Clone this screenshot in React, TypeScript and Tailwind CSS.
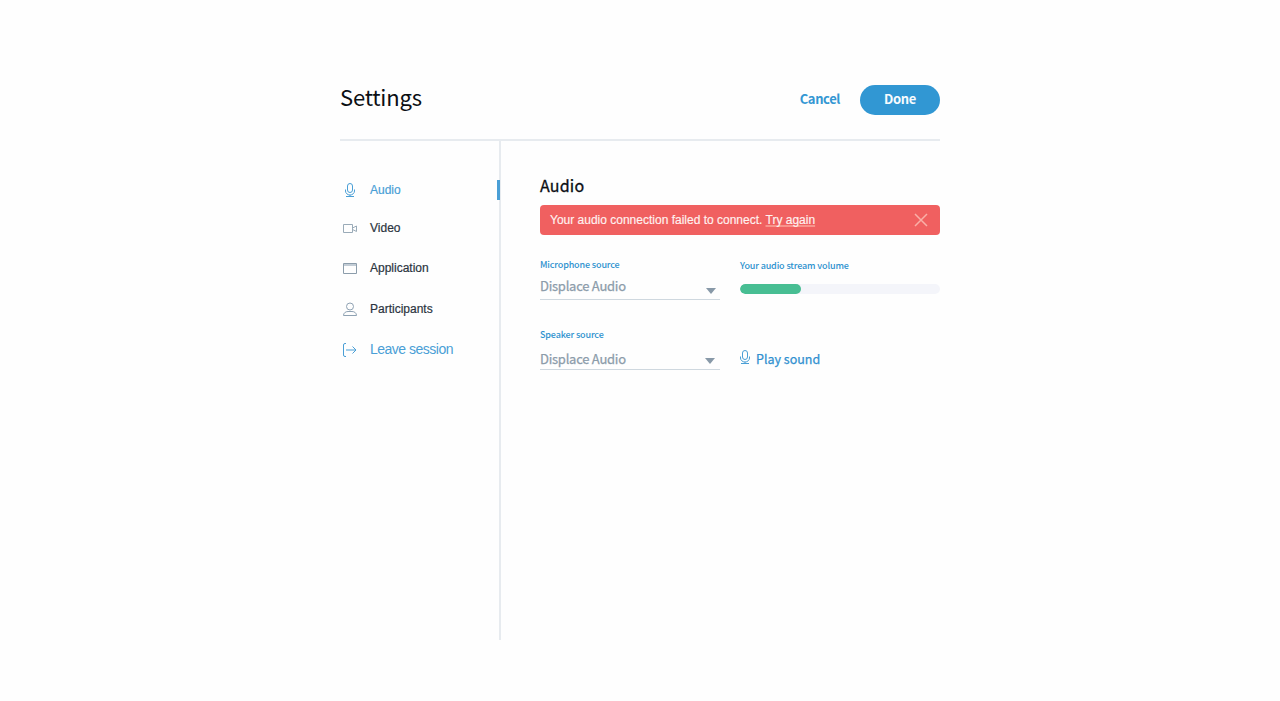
import React from "react";

const SOURCE = "font-['Noto_Sans_CJK_SC','Noto_Sans',sans-serif]";

function MicIcon({ className }: { className?: string }) {
  return (
    <svg width="12" height="16" viewBox="0 0 12 16" fill="none" stroke="#4a9fd6" strokeWidth="1" className={className}>
      <rect x="3.5" y="1.5" width="5" height="9" rx="2.5" />
      <path d="M1.5 7.5V9a4.5 4 0 0 0 9 0V7.5M6 13v1.5M2 14.500h8" />
    </svg>
  );
}

function VideoIcon() {
  return (
    <svg width="16" height="16" viewBox="0 0 16 16" fill="none" stroke="#9aabb8">
      <path d="M1.500 4.500h9v8h-9zM10.500 8l4-2v5.500l-4-2" />
    </svg>
  );
}

function WindowIcon() {
  return (
    <svg width="16" height="16" viewBox="0 0 16 16" fill="none" stroke="#8c9dab">
      <path d="M1.500 3.500h13v10h-13z" />
      <path d="M2 5h12" stroke="#a9b8c4" strokeWidth="1.400" />
    </svg>
  );
}

function PersonIcon() {
  return (
    <svg width="16" height="16" viewBox="0 0 16 16" fill="none" stroke="#8fa2b3">
      <circle cx="8" cy="5.500" r="3.500" />
      <path d="M1.500 14.500c0-2.500 2-4 4.500-4h4c2.500 0 4.500 1.500 4.500 4z" />
    </svg>
  );
}

function LeaveIcon() {
  return (
    <svg width="16" height="16" viewBox="0 0 16 16" fill="none" stroke="#4a9fd6">
      <path d="M4 2.500H3q-1.500 0-1.500 1.500v10q0 1.500 1.500 1.500h1M4 9h10M10.500 5.500l3.500 3.500-3.500 3.500" />
    </svg>
  );
}

function NavItem({ icon, label, className }: { icon: React.ReactNode; label: string; className: string }) {
  return (
    <li className={`flex h-5 items-center ${className}`}>
      <span className="ml-0.5 flex w-4 shrink-0 justify-center">{icon}</span>
      <span className="ml-3 whitespace-nowrap">{label}</span>
    </li>
  );
}

function SourceSelect({ label, className, caretClassName }: { label: string; className: string; caretClassName: string }) {
  return (
    <div className="w-[180px]">
      <div className="h-3 whitespace-nowrap text-[9px] leading-3 font-medium tracking-[-0.14px] text-[#2e92cf]">{label}</div>
      <div className={`flex h-[29px] justify-between border-b border-[#cfd8df] text-[13px] leading-5 tracking-[-0.25px] text-[#8c9caa] [-webkit-text-stroke:0.25px] ${className}`}>
        <span className="whitespace-nowrap">Displace Audio</span>
        <svg width="10" height="6" viewBox="0 0 10 6" className={caretClassName} fill="#8899a8">
          <path d="M0 0h10L5 6z" />
        </svg>
      </div>
    </div>
  );
}

export default function App() {
  return (
    <div className="min-h-[701px] bg-[#fefefe]">
      <div className={`mx-auto w-[600px] ${SOURCE}`}>
        <header className="flex h-[141px] items-start border-b-2 border-[#e7ebef] pt-[85px]">
          <h1 className="mt-[-4px] text-[22px] leading-[30px] tracking-[-0.2px] text-[#0b0f14]">Settings</h1>
          <button className="ml-auto h-[30px] pb-0.5 text-[13px] leading-[28px] font-bold tracking-[-0.4px] text-[#3497d3]">Cancel</button>
          <button className="ml-5 h-[30px] w-20 rounded-full bg-[#3197d3] pb-0.5 text-[13px] leading-[28px] font-bold tracking-[-0.3px] text-[#f7fbfe]">Done</button>
        </header>
        <div className="flex h-[499px]">
          <nav className="w-[161px] shrink-0 border-r-2 border-[#e7ebef] pt-[39px]">
            <ul className="font-['Liberation_Sans',Arial,sans-serif] text-[12px] leading-5 text-[#2b343e] [-webkit-text-stroke:0.2px]">
              <NavItem icon={<MicIcon />} label="Audio" className="-mr-px border-r-[3px] border-[#4a9fd6] text-[#4a9fd6]" />
              <NavItem icon={<VideoIcon />} label="Video" className="mt-[18px]" />
              <NavItem icon={<WindowIcon />} label="Application" className="mt-5" />
              <NavItem icon={<PersonIcon />} label="Participants" className="mt-[21px]" />
              <NavItem icon={<LeaveIcon />} label="Leave session" className="mt-[20px] text-[14px] tracking-[-0.5px] text-[#4a9fd6] [-webkit-text-stroke:0px]" />
            </ul>
          </nav>
          <main className="flex-1 pt-[34px] pl-[39px]">
            <h2 className="h-[30px] text-[16px] leading-[21px] tracking-[0.2px] text-[#0b0f14] [-webkit-text-stroke:0.3px]">Audio</h2>
            <div className="flex h-[30px] items-center rounded bg-[#f06060] pr-3 pl-2.5 font-['Liberation_Sans',Arial,sans-serif] text-[12px] text-[#fff2f0] [-webkit-text-stroke:0.15px]">
              <span className="whitespace-nowrap">
                Your audio connection failed to connect.{" "}
                <a className="underline decoration-[#f8948c] decoration-2 underline-offset-1 [text-decoration-skip-ink:none]">Try again</a>
              </span>
              <svg width="14" height="14" viewBox="0 0 14 14" className="ml-auto" stroke="#f9b0a8" strokeWidth="1.500">
                <path d="M1 1l12 12M13 1L1 13" />
              </svg>
            </div>
            <div className="mt-6 flex h-[70px] gap-5">
              <SourceSelect label="Microphone source" className="pt-[5px]" caretClassName="mt-[12px] mr-[4px]" />
              <div className="w-[200px]">
                <div className="mt-px h-3 text-[9px] leading-3 font-medium tracking-[-0.14px] text-[#2e92cf]">Your audio stream volume</div>
                <div className="mt-3 h-2.5 overflow-hidden rounded-full bg-[#f4f5fa]">
                  <div className="h-full w-[61px] rounded-full bg-[#48be93]" />
                </div>
              </div>
            </div>
            <div className="flex h-[50px] gap-5">
              <SourceSelect label="Speaker source" className="pt-[8px]" caretClassName="mt-[9px] mr-[5px]" />
              <div className="flex items-start pt-[20px] text-[12.5px] leading-5 text-[#3090d0] [-webkit-text-stroke:0.25px]">
                <MicIcon className="-ml-px" />
                <span className="ml-[5px] whitespace-nowrap">Play sound</span>
              </div>
            </div>
          </main>
        </div>
      </div>
    </div>
  );
}
